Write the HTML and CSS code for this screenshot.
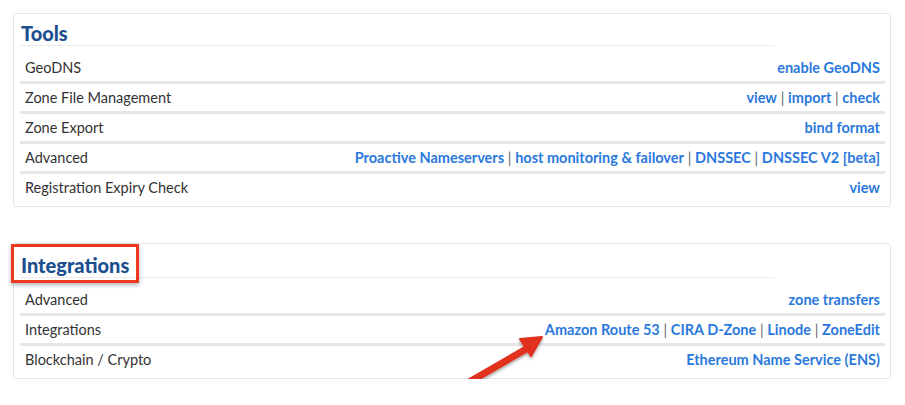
FILE: index.html
```html
<!DOCTYPE html>
<html lang="en">
<head>
  <meta charset="UTF-8" />
  <meta name="viewport" content="width=device-width, initial-scale=1.0" />
  <title>Zone Tools</title>
  <link rel="stylesheet" href="styles.css">
</head>
<body>
  <div class="page">
    <div class="card">
      <h2>Tools</h2>
      <table class="rows">
        <tr>
          <td>GeoDNS</td>
          <td class="links"><a href="#">enable GeoDNS</a></td>
        </tr>
        <tr>
          <td>Zone File Management</td>
          <td class="links"><a href="#">view</a> | <a href="#">import</a> | <a href="#">check</a></td>
        </tr>
        <tr>
          <td>Zone Export</td>
          <td class="links"><a href="#">bind format</a></td>
        </tr>
        <tr>
          <td>Advanced</td>
          <td class="links"><a href="#">Proactive Nameservers</a> | <a href="#">host monitoring &amp; failover</a> | <a href="#">DNSSEC</a> | <a href="#">DNSSEC V2 [beta]</a></td>
        </tr>
        <tr>
          <td>Registration Expiry Check</td>
          <td class="links"><a href="#">view</a></td>
        </tr>
      </table>
    </div>

    <div class="card card-integrations">
      <h2>Integrations</h2>
      <table class="rows">
        <tr>
          <td>Advanced</td>
          <td class="links"><a href="#">zone transfers</a></td>
        </tr>
        <tr>
          <td>Integrations</td>
          <td class="links"><a href="#">Amazon Route 53</a> | <a href="#">CIRA D-Zone</a> | <a href="#">Linode</a> | <a href="#">ZoneEdit</a></td>
        </tr>
        <tr>
          <td>Blockchain / Crypto</td>
          <td class="links"><a href="#">Ethereum Name Service (ENS)</a></td>
        </tr>
      </table>

      <!-- annotation overlays -->
      <div class="highlight"></div>
    </div>

    <svg class="arrow" width="100" height="75" viewBox="0 0 100 75">
      <defs>
        <filter id="shadow" x="-20%" y="-20%" width="140%" height="150%">
          <feDropShadow dx="0" dy="2" stdDeviation="1.5" flood-color="#000" flood-opacity="0.35" />
        </filter>
      </defs>
      <g filter="url(#shadow)">
        <line x1="10" y1="57" x2="74" y2="20" stroke="#e0301c" stroke-width="7" stroke-linecap="round" />
        <polygon points="88,9 66,11 77,28" fill="#e0301c" stroke="#e0301c" stroke-width="2" stroke-linejoin="round" />
      </g>
    </svg>
  </div>
</body>
</html>
```

FILE: styles.css
```css
* {
  box-sizing: border-box;
  margin: 0;
  padding: 0;
}

body {
  background-color: #fff;
  color: #333;
  font-family: Lato, "Open Sans", sans-serif;
  font-size: 14.5px;
}

.page {
  position: relative;
  padding: 13px 14px 0 13px;
}

.card {
  position: relative;
  border: 1px solid #e2e7ee;
  border-radius: 4px;
  padding: 7px 5px 5px 6px;
}

.card-integrations {
  margin-top: 36px;
  padding-top: 9px;
}

h2 {
  width: 754px;
  font-size: 20px;
  line-height: 24px;
  font-weight: 900;
  color: #1d4f8f;
  border-bottom: 1px solid #ececec;
  margin-bottom: 8px;
  padding-left: 1px;
}

.rows {
  width: 100%;
  border-collapse: collapse;
}

.rows td {
  padding: 4px 5px 4px 5px;
  line-height: 19px;
  white-space: nowrap;
}

.rows tr + tr td {
  border-top: 3px solid #e6e6e6;
}

.links {
  text-align: right;
  color: #666;
}

.links a {
  color: #2b79dd;
  font-weight: bold;
  text-decoration: none;
}

.highlight {
  position: absolute;
  left: -3px;
  top: 0;
  width: 128px;
  height: 39px;
  border: 3px solid #ec3a21;
  box-shadow: 0 2px 4px rgba(0, 0, 0, 0.3);
}

.arrow {
  position: absolute;
  left: 454px;
  top: 328px;
}
```
